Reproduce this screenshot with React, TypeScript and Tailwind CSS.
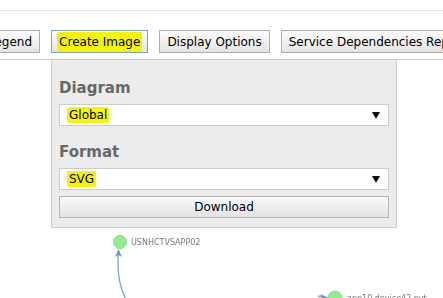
const font = "font-['DejaVu_Sans',Verdana,sans-serif]";

const ToolbarButton = ({ label, active, mark }: { label: string; active?: boolean; mark?: boolean }) => (
  <button
    className={`h-[23px] shrink-0 whitespace-nowrap px-[7px] text-[12px] leading-none text-black bg-gradient-to-b from-[#fdfdfd] to-[#e4e4e4] border ${
      active ? "border-[#7da2ce]" : "border-[#adadad]"
    }`}
  >
    {mark ? <span className="-mx-[2px] rounded-[2px] bg-[#f5f500] px-[2px] py-[3px]">{label}</span> : label}
  </button>
);

const SelectBox = ({ value }: { value: string }) => (
  <div className="flex h-[22px] w-[330px] items-center justify-between border border-[#cccccc] bg-white pl-[7px] pr-[8px]">
    <span className="rounded-[2px] bg-[#f5f500] px-[2px] py-[2px] text-[12px] leading-none text-black">{value}</span>
    <svg width="8" height="7" viewBox="0 0 8 7">
      <path d="M0 0 H8 L4 7 Z" fill="#111" />
    </svg>
  </div>
);

const Label = ({ children }: { children: string }) => (
  <div className="h-[18px] text-[15px] font-bold leading-[18px] text-[#686868]">{children}</div>
);

export default function App() {
  return (
    <div className={`relative h-[298px] w-[443px] overflow-hidden bg-white ${font}`}>
      <div className="h-[10px]" />
      <div className="border-t border-[#e6e6e6]" />
      <div className="ml-[-20px] mt-[19px] flex gap-[11px]">
        <ToolbarButton label="Legend" />
        <ToolbarButton label="Create Image" active mark />
        <ToolbarButton label="Display Options" />
        <ToolbarButton label="Service Dependencies Report" />
      </div>
      <div className="mt-[6px] border-t border-[#cfcfcf]" />

      <div className="relative z-10 ml-[51px] mt-[-1px] w-[346px] border border-[#cccccc] bg-[#ececec] px-[7px] pb-[9px] pt-[19px]">
        <Label>Diagram</Label>
        <div className="mt-[7px]">
          <SelectBox value="Global" />
        </div>
        <div className="mt-[17px]">
          <Label>Format</Label>
        </div>
        <div className="mt-[7px]">
          <SelectBox value="SVG" />
        </div>
        <button className="mt-[6px] h-[22px] w-[330px] border border-[#b5b5b5] bg-gradient-to-b from-[#fafafa] to-[#e2e2e2] text-[12px] leading-none text-black">
          Download
        </button>
      </div>

      <svg className="absolute left-0 top-0 blur-[0.3px]" width="443" height="298">
        <path d="M126 300 Q116 280 118.5 252" fill="none" stroke="#7ea3d4" strokeWidth="1.3" />
        <path d="M118.5 249 L115 257 L118.5 255 L122 257 Z" fill="#6f97cc" />
        <circle cx="120" cy="242" r="6.5" fill="#90ee90" stroke="#84dc84" strokeWidth="1" />
        <text x="131" y="245" fontSize="8" fill="#7a7a7a" fontFamily="DejaVu Sans, sans-serif">USNHCTVSAPP02</text>

        <path d="M318 296 L327 298" fill="none" stroke="#7ea3d4" strokeWidth="1.3" />
        <path d="M329 298 L320 294 L322 298 Z" fill="#6f97cc" />
        <circle cx="335" cy="298" r="7" fill="#90ee90" stroke="#84dc84" strokeWidth="1" />
        <text x="347" y="301" fontSize="8" fill="#7a7a7a" fontFamily="DejaVu Sans, sans-serif">app10.device42.pvt</text>
      </svg>
    </div>
  );
}
